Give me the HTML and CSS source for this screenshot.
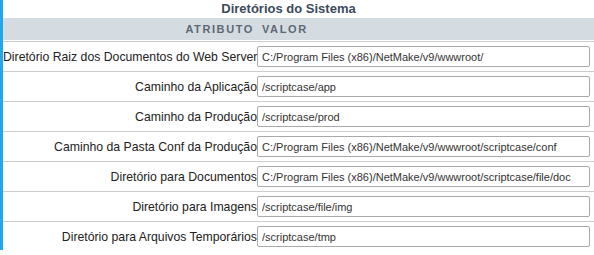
FILE: index.html
```html
<!DOCTYPE html>
<html lang="pt-BR">

<head>
    <meta charset="UTF-8">
    <meta name="viewport" content="width=device-width, initial-scale=1.0">

    <title>Diretórios do Sistema</title>

    <link rel="stylesheet" href="styles.css">
</head>

<body>
    <main class="painel">
        <h1 class="titulo">Diretórios do Sistema</h1>

        <div class="cabecalho">
            <span class="col-atributo">ATRIBUTO</span>
            <span class="col-valor">VALOR</span>
        </div>

        <div class="linha">
            <label class="atributo">Diretório Raiz dos Documentos do Web Server</label>
            <input class="valor" value="C:/Program Files (x86)/NetMake/v9/wwwroot/" readonly>
        </div>

        <div class="linha">
            <label class="atributo">Caminho da Aplicação</label>
            <input class="valor" value="/scriptcase/app" readonly>
        </div>

        <div class="linha">
            <label class="atributo">Caminho da Produção</label>
            <input class="valor" value="/scriptcase/prod" readonly>
        </div>

        <div class="linha">
            <label class="atributo">Caminho da Pasta Conf da Produção</label>
            <input class="valor" value="C:/Program Files (x86)/NetMake/v9/wwwroot/scriptcase/conf" readonly>
        </div>

        <div class="linha">
            <label class="atributo">Diretório para Documentos</label>
            <input class="valor" value="C:/Program Files (x86)/NetMake/v9/wwwroot/scriptcase/file/doc" readonly>
        </div>

        <div class="linha">
            <label class="atributo">Diretório para Imagens</label>
            <input class="valor" value="/scriptcase/file/img" readonly>
        </div>

        <div class="linha">
            <label class="atributo">Diretório para Arquivos Temporários</label>
            <input class="valor" value="/scriptcase/tmp" readonly>
        </div>
    </main>
</body>

</html>
```

FILE: styles.css
```css
* {
    margin: 0;
    padding: 0;
    box-sizing: border-box;
}

body {
    background-color: white;

    font-family: "Liberation Sans", Arial, sans-serif;
}

.painel {
    width: 594px;
    height: 250px;

    border-left: solid 3px #1ea8f0;
}

.titulo {
    height: 18px;

    padding-right: 20px;

    font-size: 13px;
    line-height: 17px;
    text-align: center;
    color: #3c4a5c;
}

.cabecalho {
    height: 22px;
    margin-bottom: 1px;

    display: flex;
    align-items: center;

    background-color: #d4dce1;

    font-size: 11px;
    font-weight: bold;
    letter-spacing: 1.6px;
    color: #5d6874;
}

.col-atributo {
    width: 254px;
    padding-right: 3px;

    text-align: right;
}

.col-valor {
    padding-left: 5px;
}

.linha {
    height: 30px;

    display: flex;
    align-items: center;

    border-top: solid 1px #cccccc;
}

.atributo {
    width: 254px;

    font-size: 12.25px;
    text-align: right;
    white-space: nowrap;
    color: #222222;
}

.valor {
    width: 333px;
    height: 21px;

    padding-left: 4px;

    font-family: "Liberation Sans", Arial, sans-serif;
    font-size: 11px;
    color: #333333;

    border: solid 1px #a9a9a9;
    border-radius: 2px;
    outline: none;
}
```
